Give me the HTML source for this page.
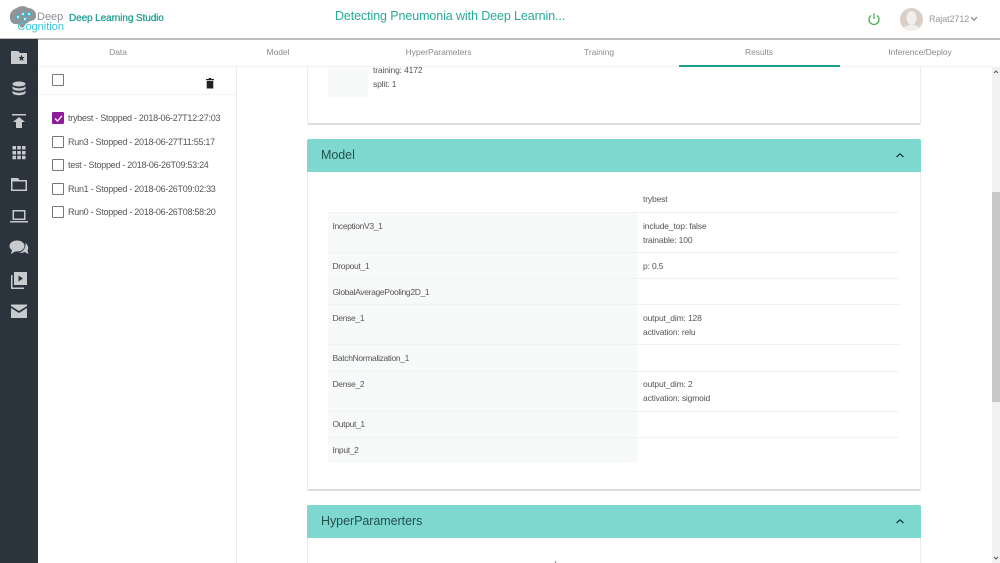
<!DOCTYPE html>
<html><head><meta charset="utf-8"><style>
html,body{margin:0;padding:0;width:1000px;height:563px;overflow:hidden;background:#fff;font-family:"Liberation Sans",sans-serif}
#p{position:relative;width:1000px;height:563px;overflow:hidden}
.a{position:absolute;white-space:nowrap}
.t{font-size:8.5px;color:#555;line-height:14px;letter-spacing:-.15px}
.k{letter-spacing:-.33px}
.tab{font-size:8.5px;color:#8c8c8c;top:46.5px;transform:translateX(-50%);line-height:11px;letter-spacing:-.05px}
.run{font-size:9px;color:#555;left:68px;line-height:12px;letter-spacing:-.28px}
.cb{position:absolute;left:51.5px;width:10px;height:10px;border:1.3px solid #777;border-radius:1px;background:#fff}
.row{position:absolute;left:328px;width:571px;border-top:1px solid #f1f3f2}
.l{position:absolute;left:0;top:0;bottom:0;width:310px;background:#f8faf9}
.head{position:absolute;left:307px;width:614px;height:33px;background:#7fd8d0;border-radius:2px 2px 0 0}
.head span{position:absolute;left:14px;top:9px;font-size:12.5px;color:#24504c;line-height:15px;letter-spacing:-.05px}
.card{position:absolute;left:306.5px;width:614px;background:#fff;border:1px solid #ececec;border-bottom:2px solid #dcdcdc;border-radius:2px;box-sizing:border-box}
</style></head><body><div id="p">

<div class="a" style="left:0;top:38px;width:1000px;height:1.5px;background:#bdbdbd"></div>
<div class="a" style="left:0;top:39px;width:37.5px;height:524px;background:#2b333d"></div>
<div class="a" style="left:236px;top:67px;width:1px;height:496px;background:#ececec"></div>

<!-- logo -->
<svg class="a" style="left:8px;top:4px" width="30" height="27" viewBox="0 0 30 27"><path d="M2 14C1 9 5 5 9 4C12 1 18 2 20 4C24 4 28 7 28 11C29 15 25 17 22 17C20 19 18 19 17 21C16 24 13 25 12 22C11 20 9 20 7 20C4 20 2 17 2 14Z" fill="#8f9599"/><g fill="#dff3f6" stroke="#2ec4d6" stroke-width="1"><circle cx="10" cy="13" r="1.6"/><circle cx="15" cy="10" r="1.6"/><circle cx="21" cy="10" r="1.6"/><circle cx="17" cy="15" r="1.6"/></g></svg>
<div class="a" style="left:37px;top:9.500px;font-size:11px;color:#8b8f92;line-height:15px">Deep</div>
<div class="a" style="left:17.500px;top:20px;font-size:11px;color:#35c6da;line-height:15px">Cognition</div>
<div class="a" style="left:69px;top:12px;font-size:10px;color:#1f9e92;line-height:13px;letter-spacing:-.1px;-webkit-text-stroke:.25px #1f9e92">Deep Learning Studio</div>
<div class="a" style="left:335px;top:9px;font-size:12.5px;color:#27a99c;line-height:15px;letter-spacing:-.1px">Detecting Pneumonia with Deep Learnin...</div>

<svg class="a" style="left:867px;top:12px" width="14" height="14" viewBox="0 0 14 14"><path d="M4 3.500A5 5 0 1 0 10 3.500M7 1.500V7" fill="none" stroke="#4caf50" stroke-width="1.300"/></svg>
<svg class="a" style="left:900px;top:8px" width="23" height="23" viewBox="0 0 23 23"><defs><clipPath id="c"><circle cx="11.500" cy="11.500" r="11.500"/></clipPath></defs><circle cx="11.500" cy="11.500" r="11.500" fill="#d9cfc9"/><g clip-path="url(#c)"><ellipse cx="11.500" cy="10" rx="5" ry="7" fill="#f1eeec"/><ellipse cx="11.500" cy="22" rx="9" ry="5" fill="#f1eeec"/></g></svg>
<div class="a" style="left:929px;top:13px;font-size:9px;color:#999;line-height:12px;letter-spacing:-.1px">Rajat2712</div>
<svg class="a" style="left:970px;top:16px" width="8" height="6" viewBox="0 0 8 6"><path d="M1 1L4 4.200L7 1" fill="none" stroke="#777" stroke-width="1.100"/></svg>

<!-- sidebar icons -->
<svg class="a" style="left:0;top:39px" width="38" height="290" viewBox="0 0 38 290" fill="#c8cbce">
<path d="M11 12H18L20 14H27V25H11Z"/><path d="M21.500 15.500L22.400 18H24.500L22.900 19.600L23.500 22L21.500 20.600L19.500 22L20.100 19.600L18.500 18H20.600Z" fill="#2b333d"/>
<ellipse cx="19" cy="45" rx="6.500" ry="2.500"/><path d="M12.500 47C14 50 24 50 25.500 47V49.500C24 52.500 14 52.500 12.500 49.500ZM12.500 51.500C14 54.500 24 54.500 25.500 51.500V54C24 57 14 57 12.500 54Z"/>
<path d="M12 75H26V76.500H12ZM19 78L25 83H22V89H16V83H13Z"/>
<path d="M12.500 107h3.500v3.500h-3.500zM17.300 107h3.500v3.500h-3.500zM22 107h3.500v3.500h-3.500zM12.500 112h3.500v3.500h-3.500zM17.300 112h3.500v3.500h-3.500zM22 112h3.500v3.500h-3.500zM12.500 116.800h3.500v3.500h-3.500zM17.300 116.800h3.500v3.500h-3.500zM22 116.800h3.500v3.500h-3.500z"/>
<path d="M11 139H18L19.500 141H27V152H11ZM12.500 142.500V150.500H25.500V142.500Z" fill-rule="evenodd"/>
<path d="M12.500 171H25.500V181H12.500ZM14 172.500V179.500H24V172.500Z" fill-rule="evenodd"/><path d="M10 182H28V183.500H10Z"/>
<ellipse cx="17" cy="207" rx="7.500" ry="5.500"/><path d="M12 211L11 215L16 212Z"/><path d="M25.500 204C28 206 29 209 27.500 211.500L28.500 215L24.500 213C22.500 214 20.500 214 19 213.500C23 213 26 209 25.500 204Z"/>
<path d="M14 233H27V246H14ZM18.500 236.500V242.500L23 239.500Z" fill-rule="evenodd"/><path d="M11 236H12.500V248.500H24V250H11Z"/>
<path d="M11 265.500H27V267L19 272L11 267Z"/><path d="M11 269L19 274L27 269V279H11Z"/>
</svg>

<!-- left list -->
<div class="a" style="left:38px;top:94px;width:198px;height:1px;background:#f4f4f4"></div>
<div class="cb" style="top:73.500px"></div>
<svg class="a" style="left:205px;top:77px" width="10" height="12" viewBox="0 0 10 12"><path d="M1 2H3.300L4 1H6L6.700 2H9V3.200H1ZM1.700 4H8.300V11.500H1.700Z" fill="#222"/></svg>
<div class="cb" style="top:112px;background:#8e1a9c;border-color:#8e1a9c"></div>
<svg class="a" style="left:51.500px;top:112px" width="13" height="13" viewBox="0 0 13 13"><path d="M3 6.500L5.500 9L10 3.800" fill="none" stroke="#fff" stroke-width="1.300"/></svg>
<div class="run a" style="top:112px">trybest - Stopped - 2018-06-27T12:27:03</div>
<div class="cb" style="top:135.500px"></div><div class="run a" style="top:136px">Run3 - Stopped - 2018-06-27T11:55:17</div>
<div class="cb" style="top:159px"></div><div class="run a" style="top:159px">test - Stopped - 2018-06-26T09:53:24</div>
<div class="cb" style="top:182.500px"></div><div class="run a" style="top:183px">Run1 - Stopped - 2018-06-26T09:02:33</div>
<div class="cb" style="top:206px"></div><div class="run a" style="top:206px">Run0 - Stopped - 2018-06-26T08:58:20</div>

<!-- first card -->
<div class="card" style="top:50px;height:75px"></div>
<div class="a" style="left:328px;top:67px;width:40px;height:30px;background:#f8faf9"></div>
<div class="a t" style="left:373px;top:63px;background:#fff">training: 4172</div>
<div class="a t" style="left:373px;top:77px">split: 1</div>
<div class="a" style="left:38px;top:40px;width:954px;height:26px;background:#fff"></div>
<div class="a" style="left:38px;top:66px;width:954px;height:1px;background:#f1f1f1"></div>
<div class="a" style="left:679px;top:65px;width:161px;height:1.500px;background:#1f9e92"></div>
<div class="a tab" style="left:118px">Data</div>
<div class="a tab" style="left:278px">Model</div>
<div class="a tab" style="left:438.500px">HyperParameters</div>
<div class="a tab" style="left:599px">Training</div>
<div class="a tab" style="left:759px">Results</div>
<div class="a tab" style="left:920px">Inference/Deploy</div>

<!-- model card -->
<div class="card" style="top:139px;height:352px"></div>
<div class="head" style="top:139px"><span>Model</span></div>
<svg class="a" style="left:895px;top:152px" width="10" height="7" viewBox="0 0 10 7"><path d="M1.500 5L5 1.800L8.500 5" fill="none" stroke="#14383a" stroke-width="1.200"/></svg>
<div class="a t" style="left:643px;top:192px">trybest</div>

<div class="row" style="top:212px;height:40px"><div class="l"></div></div>
<div class="row" style="top:252px;height:26px"><div class="l"></div></div>
<div class="row" style="top:278px;height:26px"><div class="l"></div></div>
<div class="row" style="top:304px;height:40px"><div class="l"></div></div>
<div class="row" style="top:344px;height:26px"><div class="l"></div></div>
<div class="row" style="top:371px;height:40px"><div class="l"></div></div>
<div class="row" style="top:411px;height:26px"><div class="l"></div></div>
<div class="row" style="top:437px;height:25px"><div class="l"></div></div>

<div class="a t k" style="left:332.500px;top:218.500px">InceptionV3_1</div>
<div class="a t" style="left:643px;top:218.500px">include_top: false</div>
<div class="a t" style="left:643px;top:232.500px">trainable: 100</div>
<div class="a t k" style="left:332.500px;top:258.500px">Dropout_1</div>
<div class="a t" style="left:643px;top:258.500px">p: 0.5</div>
<div class="a t k" style="left:332.500px;top:284.500px">GlobalAveragePooling2D_1</div>
<div class="a t k" style="left:332.500px;top:310.500px">Dense_1</div>
<div class="a t" style="left:643px;top:310.500px">output_dim: 128</div>
<div class="a t" style="left:643px;top:324.500px">activation: relu</div>
<div class="a t k" style="left:332.500px;top:350.500px">BatchNormalization_1</div>
<div class="a t k" style="left:332.500px;top:377px">Dense_2</div>
<div class="a t" style="left:643px;top:377px">output_dim: 2</div>
<div class="a t" style="left:643px;top:391px">activation: sigmoid</div>
<div class="a t k" style="left:332.500px;top:417px">Output_1</div>
<div class="a t k" style="left:332.500px;top:443px">Input_2</div>

<!-- hyperparameters card -->
<div class="card" style="top:505px;height:70px"></div>
<div class="head" style="top:505px"><span>HyperParamerters</span></div>
<svg class="a" style="left:895px;top:518px" width="10" height="7" viewBox="0 0 10 7"><path d="M1.500 5L5 1.800L8.500 5" fill="none" stroke="#14383a" stroke-width="1.200"/></svg>
<div class="a" style="left:555px;top:561px;width:1px;height:2px;background:#888"></div>

<!-- scrollbar -->
<div class="a" style="left:992px;top:67px;width:8px;height:496px;background:#f1f1f1"></div>
<div class="a" style="left:992px;top:192px;width:8px;height:210px;background:#c8c8c8"></div>
<svg class="a" style="left:992px;top:68px" width="8" height="8" viewBox="0 0 8 8"><path d="M2 5L4 3L6 5" fill="none" stroke="#555" stroke-width="1"/></svg>
<svg class="a" style="left:992px;top:554px" width="8" height="8" viewBox="0 0 8 8"><path d="M2 3L4 5L6 3" fill="none" stroke="#555" stroke-width="1"/></svg>
</div></body></html>
